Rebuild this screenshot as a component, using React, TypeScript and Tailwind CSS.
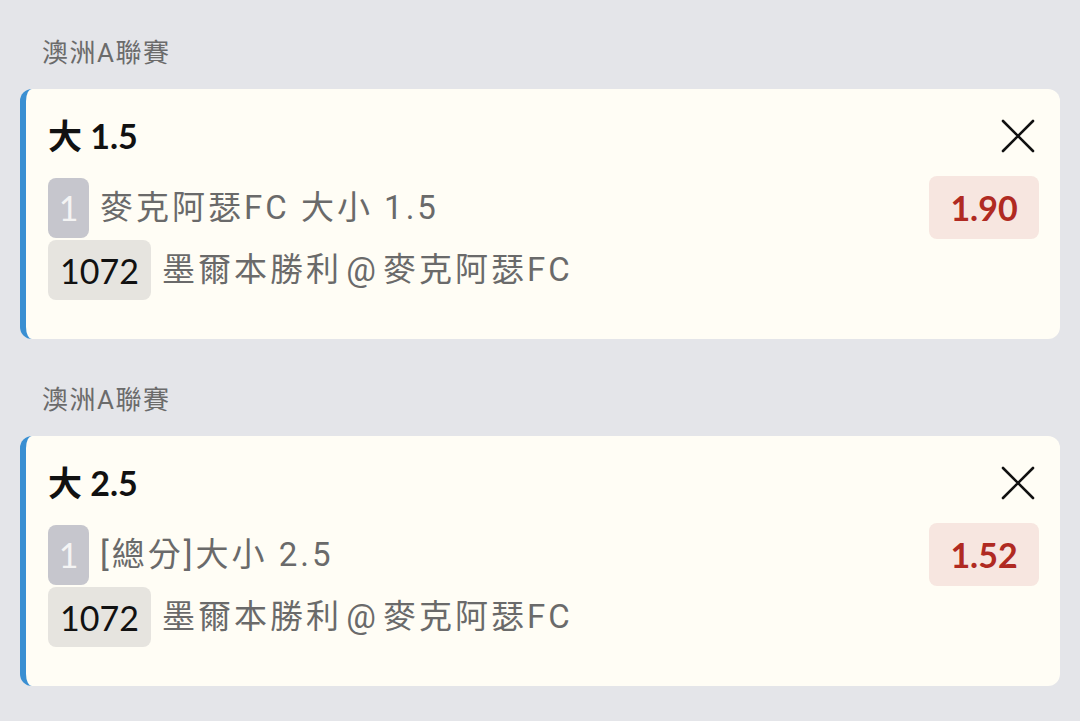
const bets = [
  { title: "大 1.5", market: "麥克阿瑟FC 大小 1.5", odds: "1.90" },
  { title: "大 2.5", market: "[總分]大小 2.5", odds: "1.52" },
];

const font = { fontFamily: "Lato, 'Noto Sans CJK TC', sans-serif" };
const android = { fontFamily: "Roboto, 'Noto Sans CJK TC', sans-serif" };

const CloseIcon = () => (
  <svg width="34" height="34" viewBox="0 0 34 34" className="mr-[4px]">
    <path d="M2 2 L32 32 M32 2 L2 32" stroke="#111" strokeWidth="2.6" strokeLinecap="round" />
  </svg>
);

const BetCard = ({ bet }) => {
  return (
    <div className="mt-[43px] first:mt-0">
      <div className="h-9 pl-[22px] text-[26px] leading-9 tracking-[1.5px] text-[#6b6b6b]" style={android}>
        澳洲A聯賽
      </div>
      <div className="mt-[18px] h-[250px] rounded-xl border-l-[6px] border-[#3a8fd2] bg-[#fffdf5] pl-[22px] pr-[21px] pt-[27px]">
        <div className="flex h-10 items-center justify-between">
          <div className="text-[34px] font-bold leading-10 text-[#111]">{bet.title}</div>
          <CloseIcon />
        </div>
        <div className="mt-5 flex items-center justify-between">
          <div className="flex items-center">
            <div className="flex h-[60px] w-[41px] items-center justify-center rounded-lg bg-[#c6c6cd] text-[34px] text-[#f4f4f4]">
              1
            </div>
            <div className="ml-[11px] text-[33px] tracking-[3px] text-[#6a6a6a]" style={android}>
              {bet.market}
            </div>
          </div>
          <div className="flex h-[63px] w-[110px] items-center justify-center rounded-lg bg-[#f7e6e0] text-[34px] font-bold text-[#b02a22]">
            {bet.odds}
          </div>
        </div>
        <div className="mt-[1px] flex items-center">
          <div className="flex h-[60px] w-[103px] items-center justify-center rounded-lg bg-[#e6e4df] text-[34px] text-[#111]">
            1072
          </div>
          <div className="ml-[11px] text-[33px] tracking-[3px] [word-spacing:-7px] text-[#6a6a6a]" style={android}>
            墨爾本勝利 @ 麥克阿瑟FC
          </div>
        </div>
      </div>
    </div>
  );
};

export default function App() {
  return (
    <div className="min-h-[721px] bg-[#e4e5e9] px-5 pt-[35px]" style={font}>
      {bets.map((bet, i) => (
        <BetCard key={i} bet={bet} />
      ))}
    </div>
  );
}
